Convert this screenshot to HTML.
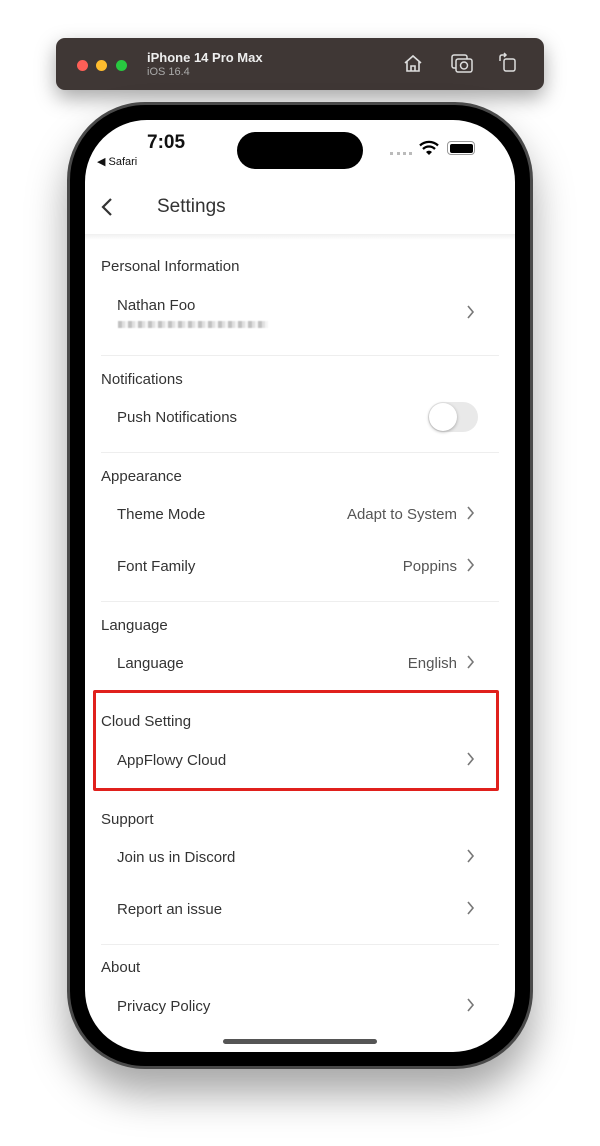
<!DOCTYPE html>
<html><head><meta charset="utf-8"><style>
*{margin:0;padding:0;box-sizing:border-box}
body{width:600px;height:1146px;background:#fff;position:relative;overflow:hidden;font-family:"Liberation Sans",sans-serif;color:#333}
.bar{position:absolute;left:56px;top:38px;width:488px;height:52px;background:#3f3735;border-radius:9px;box-shadow:0 8px 20px rgba(0,0,0,.35)}
.dot{position:absolute;top:22px;width:11px;height:11px;border-radius:50%}
.phone{position:absolute;left:67px;top:102px;width:466px;height:967px;border-radius:78px;background:#000;border:3px solid #4a4a4a;box-shadow:0 25px 40px rgba(0,0,0,.35)}
.screen{position:absolute;left:85px;top:120px;width:430px;height:932px;border-radius:62px;background:#fff;overflow:hidden}
.t{position:absolute;font-size:15px;line-height:18px;white-space:nowrap;margin-top:2px}
.h{left:16px}.i{left:32px}
.r{position:absolute;right:58px;font-size:15px;color:#555;line-height:18px;margin-top:2px}
.div{position:absolute;left:16px;width:398px;height:1px;background:#eee}
</style></head><body>
<div class="bar">
<div class="dot" style="left:21px;background:#fe5f57"></div>
<div class="dot" style="left:40px;background:#febc2e"></div>
<div class="dot" style="left:60px;background:#28c840"></div>
<div style="position:absolute;left:91px;top:12px;color:#eee;font-weight:bold;font-size:13px">iPhone 14 Pro Max</div>
<div style="position:absolute;left:91px;top:28px;color:#aaa;font-size:11px">iOS 16.4</div>
<svg style="position:absolute;left:346px;top:14px" width="22" height="22" viewBox="0 0 22 22" fill="none" stroke="#ddd" stroke-width="1.6"><path d="M3 11L11 4L19 11M5 9V19H17V9M9 19V14H13V19"/></svg>
<svg style="position:absolute;left:394px;top:14px" width="24" height="22" viewBox="0 0 24 22" fill="none" stroke="#ddd" stroke-width="1.5"><rect x="2" y="3" width="15" height="13" rx="2"/><rect x="6" y="7" width="16" height="13" rx="2" fill="#3f3735"/><circle cx="14" cy="13.5" r="3.5"/></svg>
<svg style="position:absolute;left:441px;top:14px" width="22" height="22" viewBox="0 0 22 22" fill="none" stroke="#ddd" stroke-width="1.5"><rect x="7" y="7" width="11" height="12" rx="2"/><path d="M3 9V5Q3 3 5 3H9M7 1L9 3L7 5"/></svg>
</div>
<div class="phone"></div>
<div class="screen">
<div style="position:absolute;left:62px;top:12px;font-size:19px;font-weight:bold;color:#111">7:05</div>
<div style="position:absolute;left:12px;top:35px;font-size:11px;color:#111">◀ Safari</div>
<div style="position:absolute;left:152px;top:12px;width:126px;height:37px;border-radius:19px;background:#000"></div>
<div style="position:absolute;left:305px;top:32px;width:22px;height:3px;border-top:3px dotted #bbb"></div>
<svg style="position:absolute;left:334px;top:20px" width="20" height="16" viewBox="0 0 20 16"><path d="M10 15L7 12A4 4 0 0 1 13 12Z" fill="#000"/><path d="M4 9A8.5 8.5 0 0 1 16 9M1 5.5A13 13 0 0 1 19 5.5" stroke="#000" stroke-width="2.3" fill="none"/></svg>
<div style="position:absolute;left:362px;top:21px;width:28px;height:14px;border:1.5px solid #999;border-radius:4px;padding:1.5px"><div style="width:100%;height:100%;background:#000;border-radius:2px"></div></div>
<svg style="position:absolute;left:15px;top:77px" width="14" height="20" viewBox="0 0 14 20"><path d="M11 2L3 10L11 18" stroke="#333" stroke-width="2.2" fill="none"/></svg>
<div style="position:absolute;left:72px;top:76px;font-size:19px;color:#333">Settings</div>
<div style="position:absolute;left:0;top:114px;width:430px;height:6px;background:linear-gradient(#f0f0f0,#fff)"></div>

<div class="t h" style="top:136px">Personal Information</div>
<div class="t i" style="top:175px">Nathan Foo</div>
<div style="position:absolute;left:33px;top:201px;width:150px;height:7px;background:repeating-linear-gradient(90deg,#999 0 4px,#ccc 4px 7px,#eee 7px 10px);opacity:.6;filter:blur(.6px)"></div>
<div class="div" style="top:235px"></div>
<div class="t h" style="top:249px">Notifications</div>
<div class="t i" style="top:287px">Push Notifications</div>
<div style="position:absolute;left:343px;top:282px;width:50px;height:30px;border-radius:15px;background:#e9e9e9"><div style="position:absolute;left:1px;top:1px;width:28px;height:28px;border-radius:50%;background:#fff;box-shadow:0 1px 3px rgba(0,0,0,.3)"></div></div>
<div class="div" style="top:332px"></div>
<div class="t h" style="top:346px">Appearance</div>
<div class="t i" style="top:384px">Theme Mode</div><div class="r" style="top:384px">Adapt to System</div>
<div class="t i" style="top:436px">Font Family</div><div class="r" style="top:436px">Poppins</div>
<div class="div" style="top:481px"></div>
<div class="t h" style="top:495px">Language</div>
<div class="t i" style="top:533px">Language</div><div class="r" style="top:533px">English</div>
<div class="t h" style="top:591px">Cloud Setting</div>
<div class="t i" style="top:630px">AppFlowy Cloud</div>
<div class="t h" style="top:689px">Support</div>
<div class="t i" style="top:727px">Join us in Discord</div>
<div class="t i" style="top:779px">Report an issue</div>
<div class="div" style="top:824px"></div>
<div class="t h" style="top:837px">About</div>
<div class="t i" style="top:876px">Privacy Policy</div>
<div style="position:absolute;left:138px;top:919px;width:154px;height:5px;border-radius:3px;background:#555"></div>
</div>
<div style="position:absolute;left:93px;top:690px;width:406px;height:101px;border:3px solid #e0201c;border-radius:2px"></div>
<svg width="600" height="1146" style="position:absolute;left:0;top:0" fill="none" stroke="#777" stroke-width="1.6">
<path d="M468 306L473 312L468 318"/><path d="M468 507L473 513L468 519"/><path d="M468 559L473 565L468 571"/><path d="M468 656L473 662L468 668"/><path d="M468 753L473 759L468 765"/><path d="M468 850L473 856L468 862"/><path d="M468 902L473 908L468 914"/><path d="M468 999L473 1005L468 1011"/>
</svg>
</body></html>
